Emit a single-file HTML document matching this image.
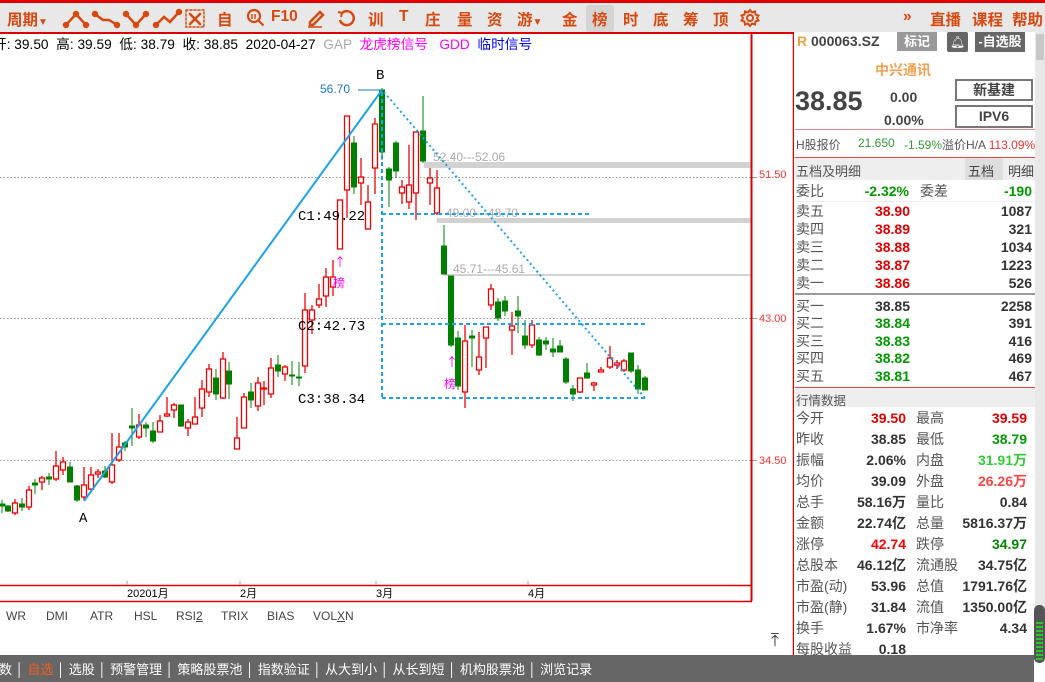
<!DOCTYPE html>
<html><head><meta charset="utf-8">
<style>
*{margin:0;padding:0;box-sizing:border-box}
body{width:1045px;height:682px;overflow:hidden;background:#fff;font-family:"Liberation Sans","Noto Sans CJK SC",sans-serif;position:relative}
.a{position:absolute;white-space:nowrap}
.tb{color:#d9480f;font-weight:bold;font-size:15.5px;top:8px}
.lb{position:absolute;left:796px;font-size:13px;color:#555;white-space:nowrap;line-height:16px}
.v{position:absolute;font-size:13px;font-weight:bold;text-align:right;color:#333;white-space:nowrap;line-height:16px}
.red{color:#e00000}.grn{color:#009900}
</style></head><body>
<div class="a" style="left:0;top:0;width:1045px;height:3px;background:#e00000"></div>
<div class="a" style="left:0;top:3px;width:1045px;height:29px;background:#e8e8e8"></div>
<div class="a" style="left:586px;top:5px;width:28px;height:27px;background:#d4d4d4;border-radius:3px"></div>
<div class="a" style="left:0;top:32px;width:794px;height:2px;background:#e00000"></div>
<div class="a tb" style="left:7px">周期<span style="font-size:10px">▼</span></div>
<svg class="a" style="left:60px;top:6px" width="150" height="24" fill="none" stroke="#d9480f" stroke-width="2.5" stroke-linecap="round">
<polyline points="6,19 16,8 26,19"/><circle cx="6" cy="19" r="2" fill="#d9480f"/><circle cx="16" cy="8" r="2" fill="#d9480f"/><circle cx="26" cy="19" r="2" fill="#d9480f"/>
<polyline points="35,8 43,14 49,14 57,19"/><circle cx="35" cy="8" r="2" fill="#d9480f"/><circle cx="57" cy="19" r="2" fill="#d9480f"/>
<polyline points="66,8 76,19 86,8"/><circle cx="66" cy="8" r="2" fill="#d9480f"/><circle cx="76" cy="19" r="2" fill="#d9480f"/><circle cx="86" cy="8" r="2" fill="#d9480f"/>
<polyline points="96,19 104,11 110,16 119,6"/><circle cx="96" cy="19" r="2" fill="#d9480f"/><circle cx="119" cy="6" r="2" fill="#d9480f"/>
<rect x="126" y="4" width="18" height="17" stroke-width="1.5" stroke-dasharray="2,2"/><path d="M130 8l10 10M140 8l-10 10"/>
</svg>
<div class="a tb" style="left:217px">自</div>
<svg class="a" style="left:246px;top:8px" width="20" height="20" fill="none" stroke="#d9480f" stroke-width="2.2"><circle cx="8" cy="8" r="6"/><path d="M12.5 12.5l5 5"/><path d="M6 6v5M9 6v5" stroke-width="1.5"/></svg>
<div class="a tb" style="left:271px">F10</div>
<svg class="a" style="left:306px;top:8px" width="20" height="20" fill="none" stroke="#d9480f" stroke-width="2.5"><path d="M4 14L14 4l3 3L7 17H4z"/><path d="M2 19h14" stroke-width="1.5"/></svg>
<svg class="a" style="left:336px;top:8px" width="20" height="20" fill="none" stroke="#d9480f" stroke-width="2.5"><path d="M6 5A7 7 0 1 1 4 12"/><path d="M2 4l4 1-1 4" stroke-width="2"/></svg>
<div class="a tb" style="left:368px">训</div>
<div class="a tb" style="left:399px">T</div>
<div class="a tb" style="left:425px">庄</div>
<div class="a tb" style="left:457px">量</div>
<div class="a tb" style="left:487px">资</div>
<div class="a tb" style="left:517px">游<span style="font-size:10px">▼</span></div>
<div class="a tb" style="left:562px">金</div>
<div class="a tb" style="left:592px">榜</div>
<div class="a tb" style="left:623px">时</div>
<div class="a tb" style="left:653px">底</div>
<div class="a tb" style="left:683px">筹</div>
<div class="a tb" style="left:713px">顶</div>
<svg class="a" style="left:740px;top:8px" width="20" height="20" fill="none" stroke="#d9480f" stroke-width="2"><circle cx="10" cy="10" r="3"/><path d="M10 2l2 2.5 3-1 .5 3 3 1-1.5 2.5 1.5 2.5-3 1-.5 3-3-1-2 2.5-2-2.5-3 1-.5-3-3-1L3 10 1.5 7.5l3-1 .5-3 3 1z"/></svg>
<div class="a tb" style="left:903px">»</div>
<div class="a tb" style="left:930px">直播</div>
<div class="a tb" style="left:972px">课程</div>
<div class="a tb" style="left:1012px">帮助</div>
<div class="a" style="left:-7px;top:33px;font-size:13.7px;color:#000">开: 39.50 &nbsp;高: 39.59 &nbsp;低: 38.79 &nbsp;收: 38.85 &nbsp;2020-04-27 <span style="color:#aaa">&nbsp;GAP</span> <span style="color:#f0f">&nbsp;龙虎榜信号 &nbsp;&nbsp;GDD</span> <span style="color:#00f">&nbsp;临时信号</span></div>
<svg class="a" style="left:0;top:0" width="794" height="655">
<g stroke="#999" stroke-dasharray="1.5,2" stroke-width="1"><line x1="0" y1="177.5" x2="751" y2="177.5"/><line x1="0" y1="318.5" x2="751" y2="318.5"/><line x1="0" y1="460.5" x2="751" y2="460.5"/></g>
<g stroke="#999"><line x1="751" y1="177.5" x2="757" y2="177.5"/><line x1="751" y1="318.5" x2="757" y2="318.5"/><line x1="751" y1="460.5" x2="757" y2="460.5"/></g>
<rect x="424" y="162" width="327" height="6" fill="#d2d2d2"/>
<rect x="437" y="218" width="314" height="5" fill="#d2d2d2"/>
<rect x="444" y="274" width="307" height="2" fill="#d2d2d2"/>
<g font-family="Liberation Sans" font-size="12" fill="#aaa"><text x="433" y="161">52.40---52.06</text><text x="446" y="217">49.00---48.70</text><text x="453" y="273">45.71---45.61</text></g>
<g font-family="Liberation Sans" font-size="11" fill="#f33"><text x="759" y="178">51.50</text><text x="759" y="322">43.00</text><text x="759" y="464">34.50</text></g>
<line x1="751.5" y1="33" x2="751.5" y2="601" stroke="#e00000" stroke-width="2"/>
<line x1="793.5" y1="33" x2="793.5" y2="655" stroke="#e00000" stroke-width="1.5"/>
<line x1="0" y1="585.5" x2="752" y2="585.5" stroke="#e00000" stroke-width="1.5"/>
<line x1="0" y1="601.5" x2="752" y2="601.5" stroke="#e00000" stroke-width="1.5"/>
<g stroke="#999"><line x1="127" y1="585" x2="127" y2="581"/><line x1="240" y1="585" x2="240" y2="581"/><line x1="376" y1="585" x2="376" y2="581"/><line x1="528" y1="585" x2="528" y2="581"/></g>
<g font-family="Liberation Sans,Noto Sans CJK SC" font-size="11" fill="#000"><text x="127" y="597">20201月</text><text x="240" y="597">2月</text><text x="376" y="597">3月</text><text x="528" y="597">4月</text></g>
<g stroke="#008000" fill="#008000" stroke-width="1">
<line x1="2" y1="500" x2="2" y2="513"/><rect x="0" y="504" width="5" height="2"/>
<line x1="8" y1="505" x2="8" y2="512"/><rect x="5.5" y="506" width="5" height="5"/>
<line x1="22" y1="498" x2="22" y2="511"/><rect x="19.5" y="504" width="5" height="3"/>
<line x1="35" y1="479" x2="35" y2="494"/><rect x="32.5" y="483" width="5" height="2"/>
<line x1="49" y1="473" x2="49" y2="485"/><rect x="46.5" y="477" width="5" height="2"/>
<line x1="70" y1="462" x2="70" y2="482"/><rect x="67.5" y="467" width="5" height="15"/>
<line x1="77" y1="485" x2="77" y2="502"/><rect x="74.5" y="486" width="5" height="14"/>
<line x1="105" y1="466" x2="105" y2="478"/><rect x="102.5" y="471" width="5" height="6"/>
<line x1="125" y1="441" x2="125" y2="451"/><rect x="122.5" y="443" width="5" height="4"/>
<line x1="132" y1="408" x2="132" y2="446"/><rect x="129.5" y="426" width="5" height="2"/>
<line x1="146" y1="422" x2="146" y2="437"/><rect x="143.5" y="425" width="5" height="3"/>
<line x1="153" y1="422" x2="153" y2="443"/><rect x="150.5" y="431" width="5" height="10"/>
<line x1="181" y1="405" x2="181" y2="427"/><rect x="178.5" y="405" width="5" height="21"/>
<line x1="216" y1="369" x2="216" y2="400"/><rect x="213.5" y="378" width="5" height="16"/>
<line x1="229" y1="362" x2="229" y2="399"/><rect x="226.5" y="371" width="5" height="13"/>
<line x1="251" y1="383" x2="251" y2="408"/><rect x="248.5" y="392" width="5" height="8"/>
<line x1="278" y1="355" x2="278" y2="377"/><rect x="275.5" y="365" width="5" height="6"/>
<line x1="292" y1="361" x2="292" y2="385"/><rect x="289.5" y="375" width="5" height="1"/>
<line x1="299" y1="362" x2="299" y2="386"/><rect x="296.5" y="377" width="5" height="1"/>
<line x1="354" y1="136" x2="354" y2="194"/><rect x="351.5" y="143" width="5" height="44"/>
<line x1="382" y1="88" x2="382" y2="160"/><rect x="379.5" y="90" width="5" height="62"/>
<line x1="389" y1="167" x2="389" y2="207"/><rect x="386.5" y="169" width="5" height="11"/>
<line x1="396" y1="141" x2="396" y2="178"/><rect x="393.5" y="143" width="5" height="28"/>
<line x1="423" y1="96" x2="423" y2="163"/><rect x="420.5" y="131" width="5" height="30"/>
<line x1="444" y1="225" x2="444" y2="274"/><rect x="441.5" y="246" width="5" height="28"/>
<line x1="451" y1="276" x2="451" y2="347"/><rect x="448.5" y="276" width="5" height="69"/>
<line x1="458" y1="331" x2="458" y2="390"/><rect x="455.5" y="338" width="5" height="48"/>
<line x1="472" y1="330" x2="472" y2="367"/><rect x="469.5" y="336" width="5" height="2"/>
<line x1="498" y1="298" x2="498" y2="321"/><rect x="495.5" y="302" width="5" height="16"/>
<line x1="505" y1="296" x2="505" y2="316"/><rect x="502.5" y="301" width="5" height="10"/>
<line x1="518" y1="296" x2="518" y2="333"/><rect x="515.5" y="311" width="5" height="5"/>
<line x1="525" y1="320" x2="525" y2="349"/><rect x="522.5" y="336" width="5" height="9"/>
<line x1="539" y1="337" x2="539" y2="356"/><rect x="536.5" y="340" width="5" height="15"/>
<line x1="546" y1="337" x2="546" y2="350"/><rect x="543.5" y="341" width="5" height="3"/>
<line x1="553" y1="338" x2="553" y2="357"/><rect x="550.5" y="349" width="5" height="3"/>
<line x1="560" y1="340" x2="560" y2="352"/><rect x="557.5" y="346" width="5" height="6"/>
<line x1="566" y1="357" x2="566" y2="384"/><rect x="563.5" y="359" width="5" height="23"/>
<line x1="573" y1="385" x2="573" y2="401"/><rect x="570.5" y="389" width="5" height="5"/>
<line x1="587" y1="363" x2="587" y2="379"/><rect x="584.5" y="373" width="5" height="5"/>
<line x1="631" y1="353" x2="631" y2="373"/><rect x="628.5" y="353" width="5" height="18"/>
<line x1="638" y1="365" x2="638" y2="394"/><rect x="635.5" y="370" width="5" height="19"/>
<line x1="645" y1="376" x2="645" y2="390"/><rect x="642.5" y="378" width="5" height="12"/>
</g>
<g stroke="#f00000" fill="#fff" stroke-width="1.3">
<line x1="15" y1="499" x2="15" y2="515"/><rect x="12.5" y="503" width="5" height="10"/>
<line x1="29" y1="486" x2="29" y2="510"/><rect x="26.5" y="490" width="5" height="17"/>
<line x1="42" y1="476" x2="42" y2="490"/><rect x="39.5" y="478" width="5" height="4"/>
<line x1="56" y1="451" x2="56" y2="481"/><rect x="53.5" y="466" width="5" height="13"/>
<line x1="63" y1="457" x2="63" y2="475"/><rect x="60.5" y="462" width="5" height="8"/>
<line x1="84" y1="467" x2="84" y2="500"/><rect x="81.5" y="485" width="5" height="12"/>
<line x1="91" y1="467" x2="91" y2="490"/><rect x="88.5" y="475" width="5" height="14"/>
<line x1="98" y1="469" x2="98" y2="478"/><rect x="95.5" y="472" width="5" height="2"/>
<line x1="112" y1="433" x2="112" y2="484"/><rect x="109.5" y="465" width="5" height="17"/>
<line x1="119" y1="433" x2="119" y2="462"/><rect x="116.5" y="447" width="5" height="13"/>
<line x1="139" y1="414" x2="139" y2="439"/><rect x="136.5" y="425" width="5" height="12"/>
<line x1="160" y1="415" x2="160" y2="432"/><rect x="157.5" y="421" width="5" height="11"/>
<line x1="167" y1="397" x2="167" y2="417"/><rect x="164.5" y="414" width="5" height="2"/>
<line x1="174" y1="403" x2="174" y2="418"/><rect x="171.5" y="405" width="5" height="5"/>
<line x1="188" y1="419" x2="188" y2="436"/><rect x="185.5" y="422" width="5" height="6"/>
<line x1="195" y1="397" x2="195" y2="424"/><rect x="192.5" y="417" width="5" height="7"/>
<line x1="202" y1="380" x2="202" y2="417"/><rect x="199.5" y="389" width="5" height="19"/>
<line x1="209" y1="364" x2="209" y2="397"/><rect x="206.5" y="369" width="5" height="23"/>
<line x1="223" y1="352" x2="223" y2="399"/><rect x="220.5" y="359" width="5" height="39"/>
<line x1="237" y1="417" x2="237" y2="449"/><rect x="234.5" y="438" width="5" height="11"/>
<line x1="244" y1="393" x2="244" y2="428"/><rect x="241.5" y="397" width="5" height="31"/>
<line x1="258" y1="377" x2="258" y2="411"/><rect x="255.5" y="383" width="5" height="23"/>
<line x1="264" y1="381" x2="264" y2="405"/><rect x="261.5" y="388" width="5" height="1"/>
<line x1="271" y1="358" x2="271" y2="398"/><rect x="268.5" y="368" width="5" height="26"/>
<line x1="285" y1="365" x2="285" y2="381"/><rect x="282.5" y="367" width="5" height="7"/>
<line x1="305" y1="293" x2="305" y2="373"/><rect x="302.5" y="310" width="5" height="56"/>
<line x1="312" y1="305" x2="312" y2="334"/><rect x="309.5" y="310" width="5" height="10"/>
<line x1="319" y1="284" x2="319" y2="308"/><rect x="316.5" y="299" width="5" height="6"/>
<line x1="326" y1="268" x2="326" y2="307"/><rect x="323.5" y="277" width="5" height="19"/>
<line x1="333" y1="260" x2="333" y2="296"/><rect x="330.5" y="277" width="5" height="10"/>
<line x1="340" y1="200" x2="340" y2="249"/><rect x="337.5" y="200" width="5" height="49"/>
<line x1="347" y1="116" x2="347" y2="218"/><rect x="344.5" y="116" width="5" height="74"/>
<line x1="361" y1="158" x2="361" y2="205"/><rect x="358.5" y="177" width="5" height="6"/>
<line x1="368" y1="185" x2="368" y2="229"/><rect x="365.5" y="202" width="5" height="27"/>
<line x1="375" y1="118" x2="375" y2="194"/><rect x="372.5" y="124" width="5" height="44"/>
<line x1="402" y1="180" x2="402" y2="204"/><rect x="399.5" y="187" width="5" height="6"/>
<line x1="409" y1="145" x2="409" y2="209"/><rect x="406.5" y="185" width="5" height="17"/>
<line x1="416" y1="132" x2="416" y2="220"/><rect x="413.5" y="132" width="5" height="61"/>
<line x1="430" y1="168" x2="430" y2="205"/><rect x="427.5" y="178" width="5" height="5"/>
<line x1="437" y1="170" x2="437" y2="215"/><rect x="434.5" y="188" width="5" height="25"/>
<line x1="465" y1="325" x2="465" y2="408"/><rect x="462.5" y="341" width="5" height="51"/>
<line x1="479" y1="332" x2="479" y2="375"/><rect x="476.5" y="357" width="5" height="13"/>
<line x1="486" y1="327" x2="486" y2="368"/><rect x="483.5" y="327" width="5" height="11"/>
<line x1="491" y1="284" x2="491" y2="310"/><rect x="488.5" y="289" width="5" height="16"/>
<line x1="512" y1="312" x2="512" y2="355"/><rect x="509.5" y="326" width="5" height="4"/>
<line x1="532" y1="320" x2="532" y2="348"/><rect x="529.5" y="325" width="5" height="20"/>
<line x1="580" y1="378" x2="580" y2="393"/><rect x="577.5" y="378" width="5" height="14"/>
<line x1="594" y1="382" x2="594" y2="391"/><rect x="591.5" y="383" width="5" height="2"/>
<line x1="601" y1="367" x2="601" y2="372"/><rect x="598.5" y="370" width="5" height="2"/>
<line x1="610" y1="346" x2="610" y2="369"/><rect x="607.5" y="358" width="5" height="9"/>
<line x1="617" y1="360" x2="617" y2="369"/><rect x="614.5" y="363" width="5" height="2"/>
<line x1="624" y1="359" x2="624" y2="372"/><rect x="621.5" y="361" width="5" height="9"/>
</g>
<line x1="84" y1="501" x2="382" y2="90" stroke="#1aa3e8" stroke-width="2"/>
<line x1="358" y1="90" x2="382" y2="90" stroke="#1a7ac8" stroke-width="1"/>
<g stroke="#1aa3e8" stroke-width="2" stroke-dasharray="4,3" fill="none">
<line x1="382" y1="92" x2="382" y2="398"/>
<line x1="382" y1="214" x2="590" y2="214"/>
<line x1="382" y1="324" x2="645" y2="324"/>
<line x1="382" y1="398" x2="645" y2="398"/>
</g>
<line x1="384" y1="92" x2="645" y2="398" stroke="#1aa3e8" stroke-width="2" stroke-dasharray="2,3"/>
<g font-family="Liberation Mono" font-size="14" fill="#000">
<text x="298" y="220">C1:49.22</text><text x="298" y="330">C2:42.73</text><text x="298" y="403">C3:38.34</text>
<text x="376" y="79">B</text><text x="79" y="522">A</text></g>
<text x="320" y="93" font-family="Liberation Sans" font-size="12" fill="#1a7ac8">56.70</text>
<g font-family="Noto Sans CJK SC" font-size="12" fill="#f0f"><text x="334" y="266">↑</text><text x="333" y="287">榜</text><text x="446" y="366">↑</text><text x="444" y="388">榜</text></g>
</svg>
<div class="a" style="left:6px;top:609px;font-size:12px;color:#444">WR</div>
<div class="a" style="left:46px;top:609px;font-size:12px;color:#444">DMI</div>
<div class="a" style="left:90px;top:609px;font-size:12px;color:#444">ATR</div>
<div class="a" style="left:134px;top:609px;font-size:12px;color:#444">HSL</div>
<div class="a" style="left:176px;top:609px;font-size:12px;color:#444">RSI<u>2</u></div>
<div class="a" style="left:221px;top:609px;font-size:12px;color:#444">TRIX</div>
<div class="a" style="left:267px;top:609px;font-size:12px;color:#444">BIAS</div>
<div class="a" style="left:313px;top:609px;font-size:12px;color:#444">VOL<u>X</u>N</div>
<div class="a" style="left:771px;top:630px;font-size:18px;color:#444">⤒</div>
<div class="a" style="left:1035px;top:32px;width:10px;height:623px;background:#e8e8e8"></div>
<div class="a" style="left:1036px;top:34px;width:8px;height:26px;background:#c8c8c8"></div>
<div class="a" style="left:797px;top:33px;font-size:14px;font-weight:bold;color:#f0a040">R <span style="color:#444">000063.SZ</span></div>
<div class="a" style="left:897px;top:32px;width:40px;height:19px;background:#999;color:#fff;font-size:13px;font-weight:bold;text-align:center;line-height:19px">标记</div>
<div class="a" style="left:947px;top:32px;width:21px;height:20px;background:#666;border-radius:2px;color:#fff;font-size:12px;text-align:center;line-height:20px">🔔︎</div>
<div class="a" style="left:975px;top:32px;width:50px;height:20px;background:#666;color:#fff;font-size:13px;font-weight:bold;text-align:center;line-height:20px">-自选股</div>
<div class="a" style="left:875px;top:60px;font-size:14px;font-weight:bold;color:#f5a050">中兴通讯</div>
<div class="a" style="left:795px;top:86px;font-size:27px;font-weight:bold;color:#444">38.85</div>
<div class="a" style="left:890px;top:89px;font-size:14px;font-weight:bold;color:#444">0.00</div>
<div class="a" style="left:884px;top:112px;font-size:14px;font-weight:bold;color:#444">0.00%</div>
<div class="a" style="left:955px;top:79px;width:78px;height:22px;border:2px solid #777;font-size:14px;font-weight:bold;color:#444;text-align:center;line-height:18px">新基建</div>
<div class="a" style="left:955px;top:105px;width:78px;height:23px;border:2px solid #777;font-size:14px;font-weight:bold;color:#444;text-align:center;line-height:19px">IPV6</div>
<div class="a" style="left:795px;top:129px;width:240px;height:1px;background:#e88"></div>
<div class="a" style="left:796px;top:136px;font-size:12px;color:#555">H股报价</div>
<div class="a" style="left:858px;top:136px;font-size:12px;color:#339933">21.650</div>
<div class="a" style="left:904px;top:136px;font-size:12px;color:#339933">-1.59%<span style="color:#555">溢价H/A</span> <span style="color:#e33">113.09%</span></div>
<div class="a" style="left:795px;top:157px;width:240px;height:1px;background:#e44"></div>
<div class="a" style="left:795px;top:158px;width:240px;height:22px;background:#eee"></div>
<div class="a" style="left:965px;top:158px;width:38px;height:22px;background:#ddd"></div>
<div class="a" style="left:796px;top:161px;font-size:13px;color:#555">五档及明细</div>
<div class="a" style="left:968px;top:161px;font-size:13px;color:#444">五档</div>
<div class="a" style="left:1008px;top:161px;font-size:13px;color:#444">明细</div>
<div class="lb" style="top:183px;font-size:14px">委比</div>
<div class="v grn" style="left:840px;width:69px;top:183px;font-size:14px">-2.32%</div>
<div class="lb" style="left:920px;top:183px;font-size:14px">委差</div>
<div class="v grn" style="left:970px;width:62px;top:183px;font-size:14px">-190</div>
<div class="a" style="left:795px;top:201px;width:240px;height:1px;background:#eee"></div>
<div class="a" style="left:795px;top:293px;width:240px;height:2px;background:#999"></div>
<div class="a" style="left:795px;top:387px;width:240px;height:1px;background:#e44"></div>
<div class="a" style="left:795px;top:388px;width:240px;height:19px;background:#eee"></div>
<div class="a" style="left:796px;top:390px;font-size:12.5px;color:#555">行情数据</div>
<div class="lb" style="top:203px;font-size:14px">卖五</div><div class="v red" style="left:840px;width:70px;top:203px;font-size:14px">38.90</div><div class="v" style="left:970px;width:62px;top:203px;font-size:14px">1087</div>
<div class="lb" style="top:221px;font-size:14px">卖四</div><div class="v red" style="left:840px;width:70px;top:221px;font-size:14px">38.89</div><div class="v" style="left:970px;width:62px;top:221px;font-size:14px">321</div>
<div class="lb" style="top:239px;font-size:14px">卖三</div><div class="v red" style="left:840px;width:70px;top:239px;font-size:14px">38.88</div><div class="v" style="left:970px;width:62px;top:239px;font-size:14px">1034</div>
<div class="lb" style="top:257px;font-size:14px">卖二</div><div class="v red" style="left:840px;width:70px;top:257px;font-size:14px">38.87</div><div class="v" style="left:970px;width:62px;top:257px;font-size:14px">1223</div>
<div class="lb" style="top:275px;font-size:14px">卖一</div><div class="v red" style="left:840px;width:70px;top:275px;font-size:14px">38.86</div><div class="v" style="left:970px;width:62px;top:275px;font-size:14px">526</div>
<div class="lb" style="top:298px;font-size:14px">买一</div><div class="v" style="left:840px;width:70px;top:298px;font-size:14px">38.85</div><div class="v" style="left:970px;width:62px;top:298px;font-size:14px">2258</div>
<div class="lb" style="top:315px;font-size:14px">买二</div><div class="v grn" style="left:840px;width:70px;top:315px;font-size:14px">38.84</div><div class="v" style="left:970px;width:62px;top:315px;font-size:14px">391</div>
<div class="lb" style="top:333px;font-size:14px">买三</div><div class="v grn" style="left:840px;width:70px;top:333px;font-size:14px">38.83</div><div class="v" style="left:970px;width:62px;top:333px;font-size:14px">416</div>
<div class="lb" style="top:350px;font-size:14px">买四</div><div class="v grn" style="left:840px;width:70px;top:350px;font-size:14px">38.82</div><div class="v" style="left:970px;width:62px;top:350px;font-size:14px">469</div>
<div class="lb" style="top:368px;font-size:14px">买五</div><div class="v grn" style="left:840px;width:70px;top:368px;font-size:14px">38.81</div><div class="v" style="left:970px;width:62px;top:368px;font-size:14px">467</div>
<div class="lb" style="top:410px;font-size:14px">今开</div><div class="v red" style="left:830px;width:76px;top:410px;font-size:14px">39.50</div><div class="lb" style="left:916px;top:410px;font-size:14px">最高</div><div class="v red" style="left:950px;width:77px;top:410px;font-size:14px">39.59</div>
<div class="lb" style="top:431px;font-size:14px">昨收</div><div class="v" style="left:830px;width:76px;top:431px;font-size:14px">38.85</div><div class="lb" style="left:916px;top:431px;font-size:14px">最低</div><div class="v grn" style="left:950px;width:77px;top:431px;font-size:14px">38.79</div>
<div class="lb" style="top:452px;font-size:14px">振幅</div><div class="v" style="left:830px;width:76px;top:452px;font-size:14px">2.06%</div><div class="lb" style="left:916px;top:452px;font-size:14px">内盘</div><div class="v" style="left:950px;width:77px;top:452px;font-size:14px;color:#3c3">31.91万</div>
<div class="lb" style="top:473px;font-size:14px">均价</div><div class="v" style="left:830px;width:76px;top:473px;font-size:14px">39.09</div><div class="lb" style="left:916px;top:473px;font-size:14px">外盘</div><div class="v" style="left:950px;width:77px;top:473px;font-size:14px;color:#f44">26.26万</div>
<div class="lb" style="top:494px;font-size:14px">总手</div><div class="v" style="left:830px;width:76px;top:494px;font-size:14px">58.16万</div><div class="lb" style="left:916px;top:494px;font-size:14px">量比</div><div class="v" style="left:950px;width:77px;top:494px;font-size:14px">0.84</div>
<div class="lb" style="top:515px;font-size:14px">金额</div><div class="v" style="left:830px;width:76px;top:515px;font-size:14px">22.74亿</div><div class="lb" style="left:916px;top:515px;font-size:14px">总量</div><div class="v" style="left:940px;width:87px;top:515px;font-size:14px">5816.37万</div>
<div class="lb" style="top:536px;font-size:14px">涨停</div><div class="v" style="left:830px;width:76px;top:536px;font-size:14px;color:#f00">42.74</div><div class="lb" style="left:916px;top:536px;font-size:14px">跌停</div><div class="v" style="left:950px;width:77px;top:536px;font-size:14px;color:#080">34.97</div>
<div class="lb" style="top:557px;font-size:14px">总股本</div><div class="v" style="left:830px;width:76px;top:557px;font-size:14px">46.12亿</div><div class="lb" style="left:916px;top:557px;font-size:14px">流通股</div><div class="v" style="left:950px;width:77px;top:557px;font-size:14px">34.75亿</div>
<div class="lb" style="top:578px;font-size:14px">市盈(动)</div><div class="v" style="left:830px;width:76px;top:578px;font-size:14px">53.96</div><div class="lb" style="left:916px;top:578px;font-size:14px">总值</div><div class="v" style="left:940px;width:87px;top:578px;font-size:14px">1791.76亿</div>
<div class="lb" style="top:599px;font-size:14px">市盈(静)</div><div class="v" style="left:830px;width:76px;top:599px;font-size:14px">31.84</div><div class="lb" style="left:916px;top:599px;font-size:14px">流值</div><div class="v" style="left:940px;width:87px;top:599px;font-size:14px">1350.00亿</div>
<div class="lb" style="top:620px;font-size:14px">换手</div><div class="v" style="left:830px;width:76px;top:620px;font-size:14px">1.67%</div><div class="lb" style="left:916px;top:620px;font-size:14px">市净率</div><div class="v" style="left:950px;width:77px;top:620px;font-size:14px">4.34</div>
<div class="lb" style="top:641px;font-size:14px">每股收益</div><div class="v" style="left:830px;width:76px;top:641px;font-size:14px">0.18</div>
<div class="a" style="left:0;top:655px;width:1034px;height:27px;background:#666"></div>
<div class="a" style="left:-14px;top:659px;font-size:13px;color:#fff">指数 │ <span style="color:#f06020">自选</span> │ 选股 │ 预警管理 │ 策略股票池 │ 指数验证 │ 从大到小 │ 从长到短 │ 机构股票池 │ 浏览记录</div>
<div class="a" style="left:1034px;top:605px;width:11px;height:58px;background:#555;border-radius:5px"></div>
<div class="a" style="left:1036px;top:622px;width:7px;height:38px;background:repeating-linear-gradient(#2c2 0 2px,#555 2px 4px)"></div>
</body></html>
